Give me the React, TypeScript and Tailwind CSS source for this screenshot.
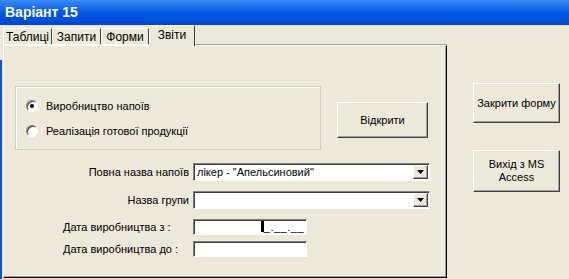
import React from 'react'

const raised = "bg-[#ECE9D8] border border-t-white border-l-white border-r-[#404040] border-b-[#404040] shadow-[inset_-1px_-1px_0_#A0A0A0]"
const sunken = "bg-white border border-t-[#808080] border-l-[#808080] border-r-white border-b-white shadow-[inset_1px_1px_0_#404040]"

function Radio({ checked }: { checked?: boolean }) {
  return (
    <span className="w-[12px] h-[12px] rounded-full bg-white border border-t-[#808080] border-l-[#808080] border-r-white border-b-white shadow-[inset_1px_1px_0_#404040] flex items-center justify-center">
      {checked && <span className="w-[4px] h-[4px] rounded-full bg-black" />}
    </span>
  )
}

function Combo({ value }: { value?: string }) {
  return (
    <div className={`${sunken} w-[237px] h-[18px] flex items-center`}>
      <span className="flex-1 pl-[3px] leading-none whitespace-nowrap">{value}</span>
      <span className={`${raised} w-[15px] h-[14px] mr-[1px] flex items-center justify-center`}>
        <svg width="7" height="4" viewBox="0 0 7 4"><path d="M0 0h7L3.5 4z" fill="#000" /></svg>
      </span>
    </div>
  )
}

const tabs = ['Таблиці', 'Запити', 'Форми', 'Звіти']
const tabW = [49, 49, 48, 46]

export default function App() {
  return (
    <div className="w-[569px] h-[279px] bg-[#ECE9D8] overflow-hidden text-[11px] text-black font-['Liberation_Sans',Arial,sans-serif]">
      <div className="h-[25px] bg-gradient-to-b from-[#3A8CF5] via-[#0058E6] to-[#0048D0] flex items-center pl-[5px]">
        <span className="text-white font-bold text-[14px]">Варіант 15</span>
      </div>

      <div className="flex h-[254px]">
        <div className="w-[2px] mt-[35px] bg-[#0054E3]" />
        <div className="w-[445px] pl-[1px] flex flex-col">
          <div className="flex items-end h-[20px] relative z-10">
            {tabs.map((t, i) => {
              const sel = i === 3
              return (
                <div key={t}
                  style={{ width: tabW[i] }}
                  className={`flex items-center justify-center border-t border-l border-t-white border-l-white border-r border-r-[#404040] ${sel ? 'h-[21px] -mb-[1px] bg-[#ECE9D8] pb-[3px]' : 'h-[17px] bg-[#ECE9D8] border-b border-b-white'}`}>
                  <span className="whitespace-nowrap text-[12px]">{t}</span>
                </div>
              )
            })}
            <div className="flex-1 h-full" />
          </div>

          <div className="h-[233px] border border-t-white border-l-white border-r-black border-b-black shadow-[inset_-1px_-1px_0_#A0A0A0,0_-1px_0_#A0A0A0] flex flex-col">
            <div className="flex items-start mt-[40px] ml-[11px]">
              <div className="w-[306px] h-[64px] border border-[#D0D0BF] shadow-[inset_1px_1px_0_white] flex flex-col justify-center gap-[8px] pl-[10px] pt-[1px]">
                <div className="flex items-center gap-[8px]"><Radio checked /><span>Виробництво напоїв</span></div>
                <div className="flex items-center gap-[8px]"><Radio /><span>Реалізація готової продукції</span></div>
              </div>
              <button className={`${raised} ml-[16px] mt-[16px] w-[91px] h-[36px] flex items-center justify-center`}>Відкрити</button>
            </div>

            <div className="ml-[59px] mt-[13px] grid grid-cols-[126px_auto] gap-x-[4px] items-center">
              <span className="text-right h-[18px] leading-[18px]">Повна назва напоїв</span>
              <Combo value={'лікер - "Апельсиновий"'} />
              <span className="text-right mt-[10px] leading-[18px]">Назва групи</span>
              <div className="mt-[10px]"><Combo /></div>
              <span className="mt-[10px] leading-[16px]">Дата виробництва з :</span>
              <div className={`${sunken} mt-[10px] w-[114px] h-[16px] flex items-end justify-end pr-[2px] pb-[1px]`}>
                <span className="w-[3px] h-[11px] bg-black mb-[1px]" />
                <span className="leading-none tracking-[0.5px]">_.__.__</span>
              </div>
              <span className="mt-[6px] leading-[16px]">Дата виробництва до :</span>
              <div className={`${sunken} mt-[6px] w-[114px] h-[16px]`} />
            </div>
          </div>
        </div>

        <div className="flex-1 flex flex-col pl-[26px] pt-[58px] gap-[27px]">
          <button className={`${raised} w-[87px] h-[40px] flex items-center justify-center`}>Закрити форму</button>
          <button className={`${raised} w-[87px] h-[42px] flex items-center justify-center leading-[13px] text-center`}>Вихід з MS<br />Access</button>
        </div>
      </div>
    </div>
  )
}
